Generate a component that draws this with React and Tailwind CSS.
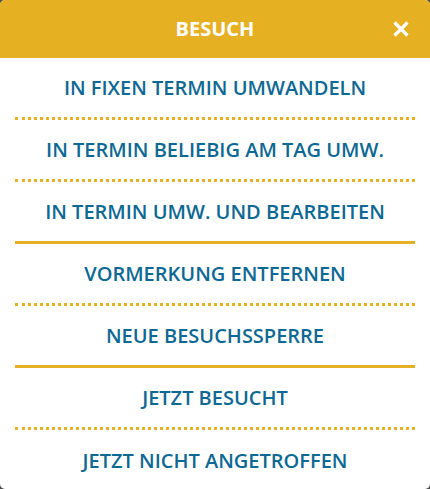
import React from "react";

const items = [
  { label: "IN FIXEN TERMIN UMWANDELN", sep: "dotted" },
  { label: "IN TERMIN BELIEBIG AM TAG UMW.", sep: "dotted" },
  { label: "IN TERMIN UMW. UND BEARBEITEN", sep: "solid" },
  { label: "VORMERKUNG ENTFERNEN", sep: "dotted" },
  { label: "NEUE BESUCHSSPERRE", sep: "solid" },
  { label: "JETZT BESUCHT", sep: "dotted" },
  { label: "JETZT NICHT ANGETROFFEN", sep: null },
];

export default function App() {
  return (
    <div className="w-[430px] h-[489px] bg-[#4a4a4a]" style={{ fontFamily: '"Open Sans", sans-serif' }}>
      <div className="w-full h-full bg-white rounded-[5px] overflow-hidden flex flex-col">
        <div className="h-[58px] bg-[#e5b022] relative flex items-center justify-center shrink-0">
          <span className="text-white font-bold text-[20px]">BESUCH</span>
          <button className="absolute right-[20px] top-[20px] w-[18px] h-[18px]">
            <svg viewBox="0 0 18 18" width="18" height="18">
              <path d="M2.5 2.5 L15.5 15.5 M15.5 2.5 L2.5 15.5" stroke="white" strokeWidth="3.2" strokeLinecap="butt" />
            </svg>
          </button>
        </div>
        <div className="flex flex-col px-[15px]">
          {items.map((it) => (
            <div
              key={it.label}
              className={
                "h-[62px] flex items-center justify-center text-[#0d6893] font-semibold text-[20px] " +
                (it.sep === "dotted"
                  ? "border-b-[3px] border-dotted border-[#e5b022]"
                  : it.sep === "solid"
                  ? "border-b-[3px] border-solid border-[#e5b022]"
                  : "")
              }
            >
              {it.label}
            </div>
          ))}
        </div>
      </div>
    </div>
  );
}
